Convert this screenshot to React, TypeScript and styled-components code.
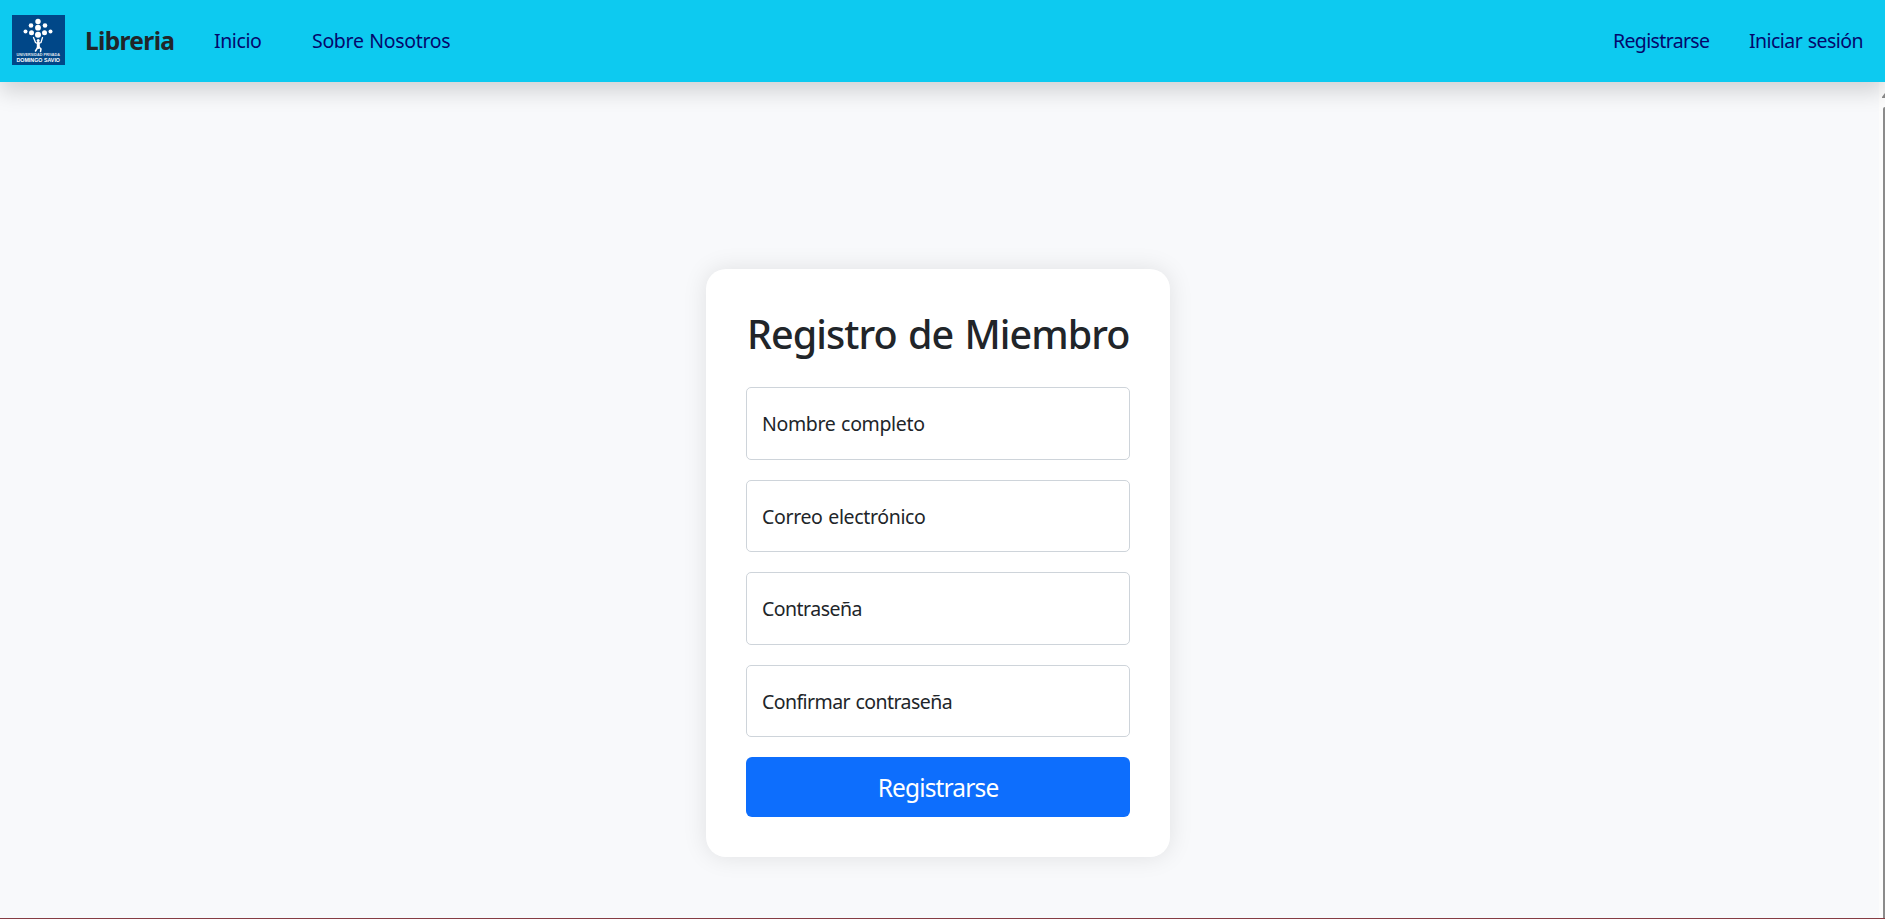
import React from "react";
import styled, { createGlobalStyle } from "styled-components";

const Global = createGlobalStyle`
  *, *::before, *::after { box-sizing: border-box; }
  body { margin: 0; overflow: hidden; background: #f8f9fb; color: #212529; font-family: "Noto Sans", "Open Sans", sans-serif; font-size: 20px; line-height: 1.5; }
`;

const Page = styled.div`
  height: 919px;
  display: flex;
  flex-direction: column;
  border-bottom: 1px solid #863c43;
`;

const Navbar = styled.nav`
  position: relative;
  flex: 0 0 82px;
  display: flex;
  align-items: center;
  padding: 0 24px 2px 12px;
  background: #0dcaf0;
  box-shadow: 0 10px 20px rgba(0, 0, 0, 0.15);
`;

const Logo = styled.svg`
  display: block;
  width: 53px;
  height: 50px;
  flex: none;
`;

const Text = styled.span<{ $spacing: number; $word?: number }>`
  letter-spacing: ${(p) => p.$spacing}px;
  word-spacing: ${(p) => p.$word ?? 0}px;
  white-space: nowrap;
`;

const Brand = styled.a`
  margin-left: 20px;
  padding-top: 3px;
  width: 129px;
  font-size: 24.5px;
  font-weight: 700;
`;

const NavLink = styled.a<{ $width: number }>`
  width: ${(p) => p.$width}px;
  padding-top: 2px;
  color: #04086c;
  font-size: 19.5px;
`;

const Spacer = styled.div`
  flex: 1;
`;

const Body = styled.div`
  flex: 1;
  display: flex;
  min-height: 0;
`;

const Main = styled.main`
  flex: 1;
  display: flex;
  justify-content: center;
  align-items: flex-start;
  padding: 187px 3px 0 0;
`;

const Card = styled.form`
  width: 464px;
  height: 588px;
  padding: 40px;
  border-radius: 20px;
  background: #fff;
  box-shadow: 0 0 25px rgba(0, 0, 0, 0.1);
  display: flex;
  flex-direction: column;
`;

const Title = styled.h1`
  margin: 0 0 29px;
  padding: 1px 0 0 1px;
  height: 49px;
  font-size: 39.5px;
  line-height: 48px;
  font-weight: 500;
`;

const Field = styled.label`
  display: flex;
  align-items: center;
  height: 72.5px;
  margin-bottom: 20px;
  padding: 1px 15px 0;
  border: 1px solid #ced4da;
  border-radius: 5px;
  font-size: 19.5px;
`;

const Submit = styled.button`
  height: 60px;
  padding: 0;
  border: 0;
  border-radius: 6px;
  background: #0d6efd;
  color: #fff;
  font-family: inherit;
  font-size: 24.5px;
`;

const Scrollbar = styled.div`
  flex: 0 0 6px;
  display: flex;
  flex-direction: column;
  align-items: flex-end;
  background: #fcfcfc;
`;

const Arrow = styled.svg`
  display: block;
  margin: 11px 0 8px;
`;

const Thumb = styled.div`
  flex: 1;
  width: 2px;
  background: #8b8b8b;
  border-top-left-radius: 3px;
`;

const dots = [
  [26, 6.5, 2.7], [19, 10.5, 2.3], [33, 10.5, 2.3], [26, 12.7, 2.9], [13.5, 16.5, 2], [38.5, 16.5, 2],
  [19.5, 17.8, 2.5], [32.5, 17.8, 2.5], [26, 19.8, 3],
];

const UniversityLogo = () => (
  <Logo viewBox="0 0 53 50">
    <rect width="53" height="50" fill="#004788" />
    {dots.map(([x, y, r], i) => <circle key={i} cx={x} cy={y} r={r} fill="#fff" />)}
    <g fill="none" stroke="#fff" strokeLinecap="round">
      <path d="M21.5 22.5l2 5 2.5 1 3-1 1.5-5" strokeWidth="1.3" />
      <path d="M26.3 28v4.5" strokeWidth="3" />
      <path d="M26 32l-2.5 4M27 32l2 2-.5 2.5" strokeWidth="1.5" />
    </g>
    <circle cx="26.2" cy="25.5" r="1.5" fill="#fff" />
    <g fill="#fff" fontFamily="Liberation Sans, sans-serif" fontWeight="700">
      <text x="4.5" y="41.2" fontSize="3.5" textLength="43.5" lengthAdjust="spacingAndGlyphs" opacity=".85">UNIVERSIDAD PRIVADA</text>
      <text x="4.5" y="46.8" fontSize="5.2" textLength="43.5" lengthAdjust="spacingAndGlyphs">DOMINGO SAVIO</text>
    </g>
  </Logo>
);

const fields = [
  { label: "Nombre completo", spacing: -0.35 },
  { label: "Correo electrónico", spacing: -0.35 },
  { label: "Contraseña", spacing: -0.53 },
  { label: "Confirmar contraseña", spacing: -0.57 },
];

export default function App() {
  return (
    <>
      <Global />
      <Page>
        <Navbar>
          <UniversityLogo />
          <Brand><Text $spacing={-0.65}>Libreria</Text></Brand>
          <NavLink $width={98}><Text $spacing={-0.4}>Inicio</Text></NavLink>
          <NavLink $width={140}><Text $spacing={-0.32} $word={1}>Sobre Nosotros</Text></NavLink>
          <Spacer />
          <NavLink $width={136}><Text $spacing={-0.65}>Registrarse</Text></NavLink>
          <NavLink $width={112}><Text $spacing={-0.55} $word={1}>Iniciar sesión</Text></NavLink>
        </Navbar>
        <Body>
          <Main>
            <Card>
              <Title><Text $spacing={-0.95} $word={2}>Registro de Miembro</Text></Title>
              {fields.map((f) => (
                <Field key={f.label}><Text $spacing={f.spacing} $word={1}>{f.label}</Text></Field>
              ))}
              <Submit type="button"><Text $spacing={-0.85}>Registrarse</Text></Submit>
            </Card>
          </Main>
          <Scrollbar>
            <Arrow width="3" height="6" viewBox="0 0 3 6"><path d="M3 0L0 4v1h3z" fill="#8b8b8b" /></Arrow>
            <Thumb />
          </Scrollbar>
        </Body>
      </Page>
    </>
  );
}
